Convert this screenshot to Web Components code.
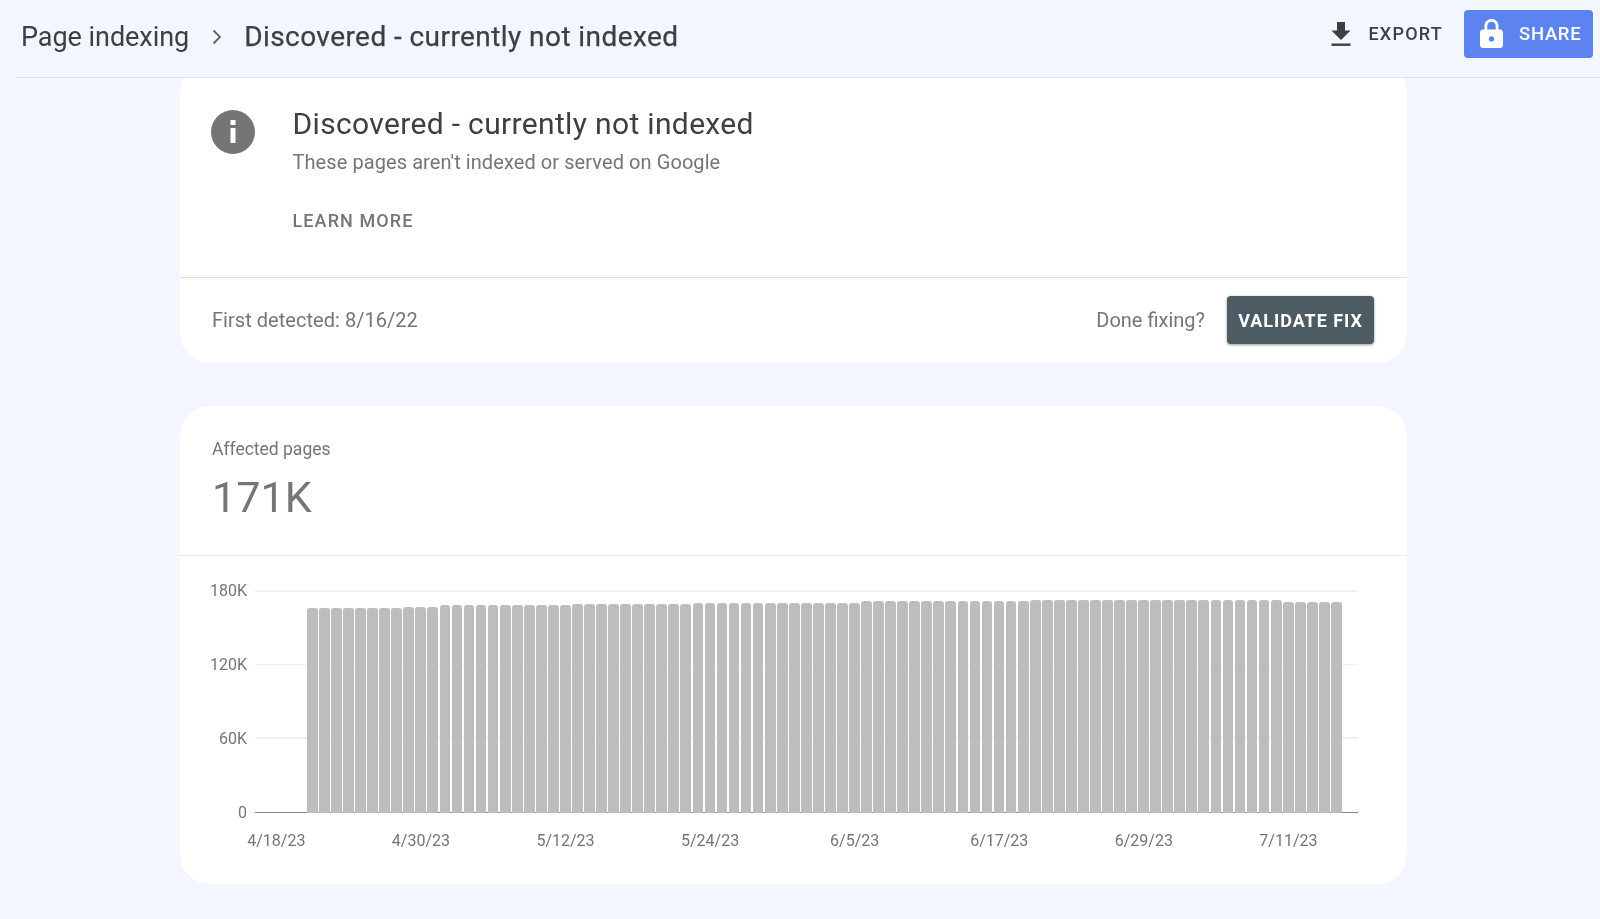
<!DOCTYPE html>
<html lang="en"><head><meta charset="utf-8"><title>Discovered - currently not indexed</title>
<style>
html,body{margin:0;height:100%;background:#f3f6fe;overflow:hidden;font-family:Roboto,"Liberation Sans",sans-serif}
body{display:flex;flex-direction:column;filter:blur(.35px)}
</style></head><body>
<gsc-topbar></gsc-topbar>
<gsc-main>
  <gsc-info-card></gsc-info-card>
  <gsc-chart-card></gsc-chart-card>
</gsc-main>
<script>
function def(name,html){customElements.define(name,class extends HTMLElement{
  constructor(){super();this.attachShadow({mode:'open'}).innerHTML=html;}
});}
def('gsc-topbar',`<style>
:host{display:block;flex:none;margin-left:16px;height:77px;border-bottom:1.5px solid #dfe2e8;box-sizing:content-box}
.bar{display:flex;align-items:center;height:77px;margin-left:5px;color:#3c4043}
.crumb{font-size:27px;line-height:32px;font-weight:400;color:#3c4043;margin-top:-4px;letter-spacing:-.05px}
.cur{font-size:28px;-webkit-text-stroke:.25px #3c4043;letter-spacing:.43px}
svg.chev{margin:-3px 18px 0 19px;flex:none}
.sp{flex:1}
.exp{display:flex;align-items:center;font-size:18px;font-weight:500;letter-spacing:1.250px;color:#3c4043;margin-right:21px;margin-top:-10px}
.exp svg{margin-right:17px;flex:none}
.share{display:flex;align-items:center;box-sizing:border-box;width:129px;height:48px;background:#5c83f0;border-radius:4px;color:#fff;font-size:18.500px;font-weight:500;letter-spacing:.7px;padding-left:16px;margin:-10px 7px 0 0}
.share svg{margin-right:16px;flex:none}
</style><div class="bar">
<span class="crumb">Page indexing</span>
<svg class="chev" width="18" height="18" viewBox="0 0 18 18"><path d="M5.5 2.5 12 9l-6.500 6.500" fill="none" stroke="#5f6368" stroke-width="1.800"/></svg>
<span class="crumb cur">Discovered - currently not indexed</span>
<span class="sp"></span>
<span class="exp"><svg width="20" height="24" viewBox="0 0 20 24"><path d="M6 0h8v8.500h5.500L10 18 .5 8.500H6z" fill="#3c4043"/><rect x="0.500" y="21.500" width="19" height="2.400" fill="#3c4043"/></svg>EXPORT</span>
<span class="share"><svg width="23" height="29" viewBox="0 0 23 29"><path fill="#fff" fill-rule="evenodd" d="M11.500 0C7.200 0 4.500 3.100 4.500 7v3.500H2.800C1.300 10.500 0 11.700 0 13.200V26.300C0 27.800 1.300 29 2.800 29h17.400c1.500 0 2.800-1.200 2.800-2.700V13.200c0-1.500-1.300-2.700-2.800-2.700H18.500V7c0-3.900-2.700-7-7-7zM7.300 10.500V7c0-2.500 1.700-4.200 4.200-4.200s4.200 1.700 4.200 4.200v3.500zM11.500 17.200a2.700 2.700 0 1 1 0 5.400 2.700 2.700 0 0 1 0-5.400z"/></svg>SHARE</span>
</div>`);
def('gsc-main',`<style>
:host{display:flex;flex-direction:column;flex:1;min-height:0;overflow:hidden;padding:0 193px 0 180px;gap:43.5px}
</style><slot></slot>`);
def('gsc-info-card',`<style>
:host{display:block;flex:none;background:#fff;border-radius:30px;margin-top:-16px;color:#757575}
.head{display:flex;gap:37.500px;padding:44px 31px 43.500px;border-bottom:1.500px solid #e0e0e0}
svg{flex:none;margin-top:4px}
h1{margin:0;font-size:30px;line-height:36px;font-weight:400;color:#3c4043;letter-spacing:.34px}
p{margin:7px 0 0;font-size:20px;line-height:26px;color:#757575;letter-spacing:.08px}
.more{margin-top:34px;font-size:18px;line-height:24px;font-weight:500;color:#757575;letter-spacing:1.1px}
.foot{display:flex;align-items:center;height:85px;padding:0 33px 0 32px;font-size:20px;color:#757575;letter-spacing:.04px}
.sp{flex:1}
.done{letter-spacing:0}
.btn{display:flex;align-items:center;justify-content:center;width:147px;height:48px;margin-left:22px;background:#4d5b65;color:#fff;font-size:18px;font-weight:700;letter-spacing:.95px;border-radius:4px;box-shadow:0 1px 3px rgba(0,0,0,.4)}
</style><div class="head">
<svg width="44" height="44" viewBox="0 0 44 44"><circle cx="22" cy="22" r="22" fill="#757575"/><rect x="19.500" y="10" width="5" height="5" fill="#fff"/><rect x="19.500" y="18" width="5" height="15" fill="#fff"/></svg>
<div><h1>Discovered - currently not indexed</h1><p>These pages aren't indexed or served on Google</p><div class="more">LEARN MORE</div></div>
</div><div class="foot"><span>First detected: 8/16/22</span><span class="sp"></span><span class="done">Done fixing?</span><span class="btn">VALIDATE FIX</span></div>`);
def('gsc-chart-card',`<style>
:host{display:block;flex:none;background:#fff;border-radius:30px;height:477.500px;color:#757575}
.sum{height:149.500px;box-sizing:border-box;padding:32px 32px 0;border-bottom:1.500px solid #e8e8e8}
.lab{font-size:17.500px;line-height:22px;color:#757575}
.num{font-size:43px;line-height:54px;margin-top:10px;color:#757575;letter-spacing:.1px}
</style><div class="sum"><div class="lab">Affected pages</div><div class="num">171K</div></div><gsc-bar-chart></gsc-bar-chart>`);
customElements.define('gsc-bar-chart',class extends HTMLElement{
  constructor(){super();
    const tops=[];
    for(let i=1;i<=86;i++){let t;
      if(i<=8)t=608;else if(i<=11)t=606.7;else if(i<=22)t=605.4;else if(i<=32)t=604;
      else if(i<=46)t=602.7;else if(i<=60)t=601.4;else if(i<=81)t=600;else t=601.5;
      tops.push(t);}
    const bars=tops.map(t=>`<i style="height:${(813-t).toFixed(1)}px"></i>`).join('');
    const y=['180K','120K','60K','0'].map(s=>`<span>${s}</span>`).join('');
    const x=['4/18/23','4/30/23','5/12/23','5/24/23','6/5/23','6/17/23','6/29/23','7/11/23'].map(s=>`<span>${s}</span>`).join('');
    this.attachShadow({mode:'open'}).innerHTML=`<style>
:host{display:block;padding:34.500px 0 0 0}
.row{display:flex;height:223px;margin-left:24px}
.y{width:43px;display:flex;flex-direction:column;justify-content:space-between;align-items:flex-end;height:238px;margin-top:-7px;font-size:16px;line-height:16px;color:#757575}
.plot{position:relative;width:1103px;height:223px;margin-left:8px;box-sizing:border-box;border-bottom:1.500px solid #8a8a8a;display:flex;flex-direction:column;justify-content:space-between}
.plot b{display:block;height:1.500px;background:#f0f0f0}
.bars{position:absolute;left:52px;bottom:-1px;width:1035px;height:215px;display:flex;align-items:flex-end;gap:1.300px}
.bars i{flex:1;background:#bdbdbd;border-radius:3px 3px 0 0}
.x{display:grid;grid-template-columns:repeat(8,144.6px);margin:17.500px 0 0 24px;font-size:16px;line-height:20px;color:#757575;justify-items:center}
</style><div class="row"><div class="y">${y}</div><div class="plot"><b></b><b></b><b></b><b style="visibility:hidden"></b><div class="bars">${bars}</div></div></div><div class="x">${x}</div>`;
  }
});
</script></body></html>
